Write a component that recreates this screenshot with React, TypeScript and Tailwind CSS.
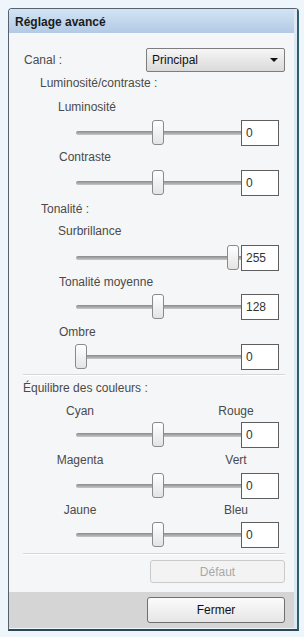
import React from "react";

function Slider({ thumb, value }: { thumb: string; value: string }) {
  return (
    <div className="ml-[66px] flex h-[26px] items-center">
      <div className="relative h-[26px] w-[166px]">
        <div className="absolute left-[1px] right-0 top-[11px] h-[4px] rounded-l-full bg-linear-to-b from-[#8a8a8a] to-[#c8c8c8]" />
        <div
          className={
            "absolute top-[0px] h-[25px] w-[12px] rounded-[3px] border border-[#8a8a8a] bg-linear-to-b from-white to-[#e4e4e4] " +
            thumb
          }
        />
      </div>
      <div className="flex h-[26px] w-[38px] items-center border border-[#5e5e5e] bg-white pl-[4px] text-[12px] text-[#333]">
        {value}
      </div>
    </div>
  );
}

function Label({ children, className }: { children: React.ReactNode; className: string }) {
  return <div className={"h-[16px] leading-[16px] " + className}>{children}</div>;
}

function PairLabel({ left, right, className }: { left: string; right: string; className: string }) {
  return (
    <div className={"flex h-[16px] leading-[16px] " + className}>
      <div className="ml-[41px] w-[60px] text-center">{left}</div>
      <div className="ml-[96px] w-[60px] text-center">{right}</div>
    </div>
  );
}

function Separator({ className }: { className: string }) {
  return <div className={"ml-[14px] h-[2px] w-[262px] border-t border-[#d6d7da] border-b border-b-white " + className} />;
}

export default function App() {
  return (
    <div className="h-[637px] w-[304px] bg-[#eef5fb] pl-[8px] pt-[8px] font-['Liberation_Sans',Arial,sans-serif] text-[12px] text-[#4a4a4a]">
      <div className="flex h-[623px] w-[291px] flex-col rounded-t-[4px] border-l border-t border-[#56626d] border-r-2 border-b-2 border-r-[#2f5f6d] border-b-[#2b4753]">
        <div className="flex flex-1 flex-col border-r-[3px] border-r-[#dde8f2]">
          <div className="flex h-[24px] shrink-0 items-center rounded-tl-[3px] bg-linear-to-b from-[#d3e3f4] to-[#b2cae4] pl-[6px] pt-[2px] text-[12px] font-bold text-[#1b1b1b]">
            Réglage avancé
          </div>
          <div className="flex h-[559px] flex-col bg-[#f5f6f8]">
            <div className="mt-[15px] flex h-[24px] items-center">
              <div className="ml-[15px] w-[122px]">Canal :</div>
              <div className="relative flex h-[24px] w-[139px] items-center rounded-[2px] border border-[#7d7d7d] bg-linear-to-b from-[#f6f6f6] to-[#dadada] pl-[5px] text-[#111]">
                Principal
                <div className="absolute right-[6px] top-[9px] h-0 w-0 border-l-[4px] border-r-[4px] border-t-[4px] border-l-transparent border-r-transparent border-t-[#111]" />
              </div>
            </div>
            <Label className="mt-[3px] pl-[31px]">Luminosité/contraste :</Label>
            <Label className="mt-[8px] pl-[49px]">Luminosité</Label>
            <div className="mt-[5px]">
              <Slider thumb="left-[77px]" value="0" />
            </div>
            <Label className="mt-[3px] pl-[50px]">Contraste</Label>
            <div className="mt-[5px]">
              <Slider thumb="left-[77px]" value="0" />
            </div>
            <Label className="mt-[5px] pl-[32px]">Tonalité :</Label>
            <Label className="mt-[6px] pl-[49px]">Surbrillance</Label>
            <div className="mt-[6px]">
              <Slider thumb="left-[152px]" value="255" />
            </div>
            <Label className="mt-[3px] pl-[50px]">Tonalité moyenne</Label>
            <div className="mt-[4px]">
              <Slider thumb="left-[77px]" value="128" />
            </div>
            <Label className="mt-[4px] pl-[50px]">Ombre</Label>
            <div className="mt-[4px]">
              <Slider thumb="left-[0px]" value="0" />
            </div>
            <Separator className="mt-[4px]" />
            <Label className="mt-[4px] pl-[14px]">Équilibre des couleurs :</Label>
            <PairLabel className="mt-[7px]" left="Cyan" right="Rouge" />
            <div className="mt-[3px]">
              <Slider thumb="left-[77px]" value="0" />
            </div>
            <PairLabel className="mt-[4px]" left="Magenta" right="Vert" />
            <div className="mt-[5px]">
              <Slider thumb="left-[77px]" value="0" />
            </div>
            <PairLabel className="mt-[3px]" left="Jaune" right="Bleu" />
            <div className="mt-[4px]">
              <Slider thumb="left-[77px]" value="0" />
            </div>
            <Separator className="mt-[5px]" />
            <div className="ml-[141px] mt-[5px] flex h-[23px] w-[135px] items-center justify-center rounded-[3px] border border-[#cacaca] bg-[#f3f3f3] text-[#a8a8a8]">
              Défaut
            </div>
          </div>
          <div className="flex h-[36px] items-start bg-[#d5d5d5] pt-[5px]">
            <div className="ml-[138px] flex h-[26px] w-[138px] items-center justify-center rounded-[3px] border border-[#707070] bg-linear-to-b from-[#fbfbfb] to-[#e6e6e6] text-[#111]">
              Fermer
            </div>
          </div>
        </div>
      </div>
    </div>
  );
}
